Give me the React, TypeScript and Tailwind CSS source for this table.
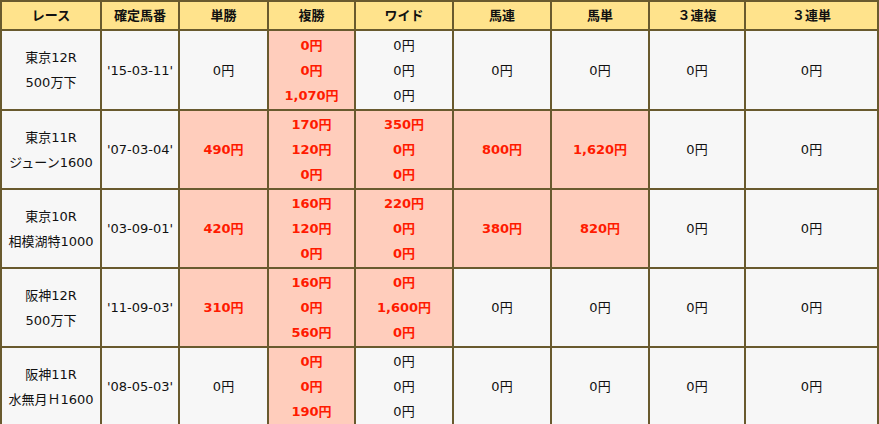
type Cell = { v: string[]; hit?: boolean };

type Row = {
  race: string[];
  date: string;
  cells: Cell[];
};

const headers = ["レース", "確定馬番", "単勝", "複勝", "ワイド", "馬連", "馬単", "３連複", "３連単"];
const widths = ["w-[98px]", "w-[76px]", "w-[87px]", "w-[85px]", "w-[96px]", "w-[96px]", "w-[96px]", "w-[94px]", "w-[131px]"];

const zero: Cell = { v: ["0円"] };
const zero3: Cell = { v: ["0円", "0円", "0円"] };

const rows: Row[] = [
  {
    race: ["東京12R", "500万下"],
    date: "'15-03-11'",
    cells: [zero, { v: ["0円", "0円", "1,070円"], hit: true }, zero3, zero, zero, zero, zero],
  },
  {
    race: ["東京11R", "ジューン1600"],
    date: "'07-03-04'",
    cells: [
      { v: ["490円"], hit: true },
      { v: ["170円", "120円", "0円"], hit: true },
      { v: ["350円", "0円", "0円"], hit: true },
      { v: ["800円"], hit: true },
      { v: ["1,620円"], hit: true },
      zero,
      zero,
    ],
  },
  {
    race: ["東京10R", "相模湖特1000"],
    date: "'03-09-01'",
    cells: [
      { v: ["420円"], hit: true },
      { v: ["160円", "120円", "0円"], hit: true },
      { v: ["220円", "0円", "0円"], hit: true },
      { v: ["380円"], hit: true },
      { v: ["820円"], hit: true },
      zero,
      zero,
    ],
  },
  {
    race: ["阪神12R", "500万下"],
    date: "'11-09-03'",
    cells: [
      { v: ["310円"], hit: true },
      { v: ["160円", "0円", "560円"], hit: true },
      { v: ["0円", "1,600円", "0円"], hit: true },
      zero,
      zero,
      zero,
      zero,
    ],
  },
  {
    race: ["阪神11R", "水無月Ｈ1600"],
    date: "'08-05-03'",
    cells: [zero, { v: ["0円", "0円", "190円"], hit: true }, zero3, zero, zero, zero, zero],
  },
];

export default function App() {
  return (
    <div className="h-[424px] w-[879px] overflow-hidden bg-white font-['DejaVu_Sans','Noto_Sans_CJK_JP',sans-serif] text-[13px] text-[#111]">
      <table className="w-[879px] table-fixed border-separate border-spacing-[2px] bg-[#695a2e]">
        <thead>
          <tr>
            {headers.map((h, i) => (
              <th key={h} className={`${widths[i]} h-[27px] bg-[#ffe38c] p-0 text-center text-[13px] font-bold leading-[25px]`}>
                {h}
              </th>
            ))}
          </tr>
        </thead>
        <tbody>
          {rows.map((row, ri) => (
            <tr key={row.date}>
              <td className={`${ri === 0 ? "h-[78px]" : "h-[77px]"} bg-[#f7f7f7] p-0 text-center leading-[25px]`}>
                {row.race.map((t) => (
                  <div key={t}>{t}</div>
                ))}
              </td>
              <td className="bg-[#f7f7f7] p-0 text-center leading-[25px]">{row.date}</td>
              {row.cells.map((c, ci) => (
                <td
                  key={ci}
                  className={
                    c.hit
                      ? "bg-[#ffcdbc] p-0 text-center font-bold leading-[25px] text-[#ff1a00]"
                      : "bg-[#f7f7f7] p-0 text-center leading-[25px]"
                  }
                >
                  {c.v.map((t, ti) => (
                    <div key={ti}>{t}</div>
                  ))}
                </td>
              ))}
            </tr>
          ))}
        </tbody>
      </table>
    </div>
  );
}
